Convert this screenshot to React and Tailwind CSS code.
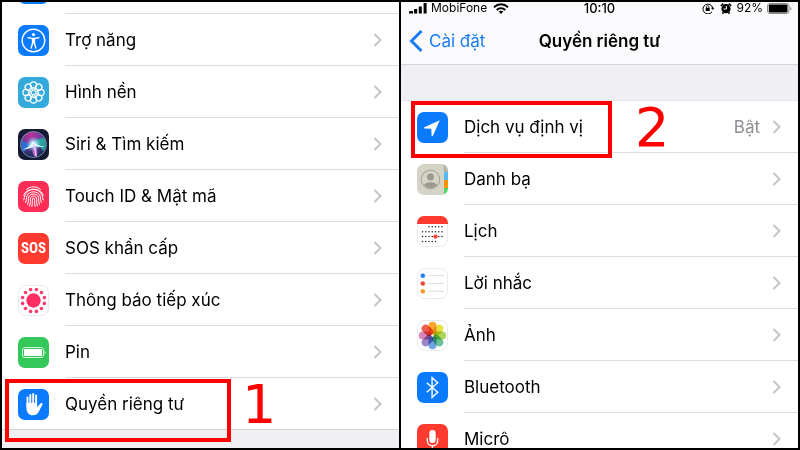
import React from "react";

const dots = (n, r) =>
  Array.from({ length: n }, (_, i) => {
    const a = ((i + 0.5) * 2 * Math.PI) / n;
    return [15.5 + r * Math.cos(a), 15.5 + r * Math.sin(a)];
  });

function Tile({ bg = "#ffffff", outlined = false, children }) {
  return (
    <svg viewBox="0 0 31 31" className="size-[31px] shrink-0" aria-hidden="true">
      <rect
        x={outlined ? 0.5 : 0}
        y={outlined ? 0.5 : 0}
        width={outlined ? 30 : 31}
        height={outlined ? 30 : 31}
        rx="7"
        fill={bg}
        stroke={outlined ? "#e9e9eb" : "none"}
      />
      {children}
    </svg>
  );
}

const AccessibilityIcon = () => (
  <Tile bg="#0a7aff">
    <circle cx="15.5" cy="15.5" r="11.3" fill="none" stroke="#fff" strokeWidth="1.4" />
    <circle cx="15.5" cy="9.6" r="1.6" fill="#fff" />
    <path
      d="M10 12.600l4 .9h3l4-.9M14.600 13.500v4.500l-1.400 5M16.400 13.500v4.500l1.400 5"
      fill="none"
      stroke="#fff"
      strokeWidth="1.400"
      strokeLinecap="round"
      strokeLinejoin="round"
    />
    <path d="M14 13h3v5.500h-3z" fill="#fff" />
  </Tile>
);

const WallpaperIcon = () => (
  <Tile bg="#34aadc">
    <g fill="none" stroke="#fff">
      {Array.from({ length: 8 }, (_, i) => (
        <g key={i} transform={`rotate(${i * 45} 15.500 15.500)`}>
          <circle cx="15.500" cy="8" r="3.100" strokeWidth="1.200" />
          <circle cx="15.500" cy="11.700" r="1.500" strokeWidth="0.800" />
        </g>
      ))}
      <circle cx="15.500" cy="15.500" r="2.200" strokeWidth="1" />
    </g>
  </Tile>
);

const SiriIcon = () => (
  <Tile bg="#171a34">
    <defs>
      <radialGradient id="siri-pink" cx="0.400" cy="0.150" r="0.800">
        <stop offset="0" stopColor="#c22f96" />
        <stop offset="0.500" stopColor="#6c3ba0" />
        <stop offset="1" stopColor="#1c2c5c" />
      </radialGradient>
      <radialGradient id="siri-glow">
        <stop offset="0" stopColor="#fff" />
        <stop offset="0.400" stopColor="#b9f2ff" stopOpacity="0.750" />
        <stop offset="1" stopColor="#5fd6ff" stopOpacity="0" />
      </radialGradient>
    </defs>
    <circle cx="15.500" cy="15.500" r="13" fill="url(#siri-pink)" stroke="#7fa3b4" strokeWidth="0.800" />
    <path d="M15 15Q21 7 26.500 9.500Q30 18 25 22Q23 17 15 15z" fill="#2f9f9c" />
    <path d="M15 15Q10 20 5 23Q2 17 4 11Q9 16 15 15z" fill="#2f6fd0" />
    <path d="M15 15Q21 20 19 28Q13 28 15 15z" fill="#b965c4" />
    <circle cx="15.500" cy="15" r="7.500" fill="url(#siri-glow)" />
    <path d="M4.500 20.500Q13 17.500 14.500 12.500Q17.500 16 27 18Q20 18.500 16.500 16.500Q13 20 4.500 20.500z" fill="#e6faff" />
    <path d="M15.500 15Q17.500 21 18 27" fill="none" stroke="#f0c8f2" strokeWidth="1.300" />
  </Tile>
);

const TouchIcon = () => (
  <Tile bg="#ff2d55">
    <g fill="none" stroke="#fff" strokeWidth="1" strokeLinecap="round">
      <path d="M8.500 8.500c4-3.700 10-3.700 14 0" />
      <path d="M5.800 14.500c2-8.500 17.400-8.500 19.400 0" />
      <path d="M5.800 19c.7-1.500.3-3.500 1.500-5.500 3-6.700 13.400-6.700 16.400 0 1.200 2 .8 4 1.500 5.500" />
      <path d="M7.600 21.500c1-2 .5-4.500 1.300-6.500 2.100-5.500 11.100-5.500 13.200 0 .8 2 .3 4.500 1.300 6.500" />
      <path d="M9.600 23.500c1.200-2.500.3-5.500 1.100-7.500 1.600-4 8-4 9.600 0 .8 2-.1 5 1.100 7.500" />
      <path d="M11.700 25c1.100-3 .2-6 .9-8.200 1-2.400 4.800-2.400 5.800 0 .7 2.200-.2 5.200.9 8.200" />
      <path d="M13.900 25.500c.8-3 .2-6 .6-7.700.3-1.100 1.700-1.100 2 0 .4 1.700-.2 4.700.6 7.700" />
    </g>
  </Tile>
);

const SosIcon = () => (
  <span className="flex size-[31px] shrink-0 items-center justify-center rounded-[7px] bg-[#ff3b30] font-['Liberation_Sans_Narrow','Roboto_Condensed','Roboto',sans-serif] text-[15px] font-bold leading-none text-white">
    SOS
  </span>
);

const ExposureIcon = () => (
  <Tile outlined>
    <circle cx="15.500" cy="15.500" r="7.200" fill="#ff2d62" />
    {dots(12, 11.3).map(([x, y], i) => (
      <circle key={i} cx={x} cy={y} r="1.800" fill="#ff3c6c" />
    ))}
  </Tile>
);

const BatteryTileIcon = () => (
  <Tile bg="#34c759">
    <rect x="4.500" y="10.500" width="21" height="10" rx="2.500" fill="none" stroke="#d4f5dc" />
    <rect x="6" y="12" width="18" height="7" rx="1" fill="#fff" />
    <path d="M26.500 13.800c1.500.4 1.500 3 0 3.400z" fill="#d4f5dc" />
  </Tile>
);

const HandIcon = () => (
  <Tile bg="#0a7aff">
    <g stroke="#fff" strokeWidth="1.900" strokeLinecap="round" fill="none">
      <path d="M9.500 8.500V18M12.300 6V16M15.200 5V16M18.100 6.500V17" />
    </g>
    <path
      d="M8.500 14h10.600v4.200l3.200-3.600c1-1 2.700-.4 2.200.9L21 22.300c-1.100 2.500-3.200 3.900-6.200 3.900-4 0-6.300-2.700-6.300-7z"
      fill="#fff"
    />
  </Tile>
);

const LocationIcon = () => (
  <Tile bg="#0a7aff">
    <path d="M22.800 8.200L7.400 15.300c-.7.400-.5 1.100.2 1.100l6.700.3.300 7c0 .8.800.9 1.200.2z" fill="#fff" />
  </Tile>
);

const ContactsIcon = () => (
  <Tile bg="#d5d2c6">
    <defs>
      <clipPath id="contacts-edge">
        <rect width="31" height="31" rx="7" />
      </clipPath>
      <clipPath id="contacts-face">
        <circle cx="13.500" cy="15.500" r="8.600" />
      </clipPath>
    </defs>
    <g clipPath="url(#contacts-edge)">
      <rect x="26.500" width="5" height="8" fill="#b7b5aa" />
      <rect x="27" y="8" width="4" height="8" fill="#55b9f3" />
      <rect x="27" y="16" width="4" height="8" fill="#ff9500" />
      <rect x="27" y="24" width="4" height="7" fill="#4cd964" />
    </g>
    <circle cx="13.500" cy="15.500" r="9.300" fill="none" stroke="#9c998f" strokeWidth="0.900" />
    <g clipPath="url(#contacts-face)" fill="#9c998f">
      <circle cx="13.500" cy="13" r="3.400" />
      <ellipse cx="13.500" cy="22.500" rx="7" ry="4.200" />
    </g>
  </Tile>
);

const calendarDays = [
  [10.8, 2, 6],
  [15.8, 0, 6],
  [20.6, 0, 6],
  [25.6, 0, 4],
].flatMap(([y, from, to]) => Array.from({ length: to - from + 1 }, (_, i) => [5.5 + (from + i) * 3.25, y]));

const CalendarIcon = () => (
  <Tile outlined>
    <path d="M0 10V7a7 7 0 0 1 7-7h17a7 7 0 0 1 7 7v1H0z" fill="#ff3b30" />
    {calendarDays.map(([x, y]) => (
      <circle key={`${x}-${y}`} cx={x} cy={y} r="0.750" fill="#222" />
    ))}
    <circle cx="18.500" cy="20.600" r="2.100" fill="#ff3b30" />
  </Tile>
);

const RemindersIcon = () => (
  <Tile outlined>
    {[
      [7.7, "#1f7cf2"],
      [15.5, "#f24438"],
      [23.3, "#f59a23"],
    ].map(([y, color]) => (
      <g key={color}>
        <circle cx="5.800" cy={y} r="2" fill={color} stroke={color} strokeOpacity="0.400" strokeWidth="1.200" />
        <path d={`M11.500 ${y}H27`} stroke="#d8d8dc" strokeWidth="0.900" />
      </g>
    ))}
  </Tile>
);

const PhotosIcon = () => (
  <Tile outlined>
    {["#f99a1c", "#e7dc2a", "#a5cf45", "#5bbd8a", "#5f9be0", "#8f79c2", "#d07bb4", "#ee4d3c"].map((color, i) => (
      <rect
        key={color}
        x="11.500"
        y="1.800"
        width="8"
        height="12.600"
        rx="4"
        fill={color}
        fillOpacity="0.900"
        transform={`rotate(${i * 45} 15.500 15.500)`}
        className="mix-blend-multiply"
      />
    ))}
  </Tile>
);

const BluetoothIcon = () => (
  <Tile bg="#0a7aff">
    <path
      d="M9.700 10.700l11 9.600-5.600 5.200V5.500l5.600 5.200-11 9.600"
      fill="none"
      stroke="#fff"
      strokeWidth="1.400"
      strokeLinejoin="miter"
    />
  </Tile>
);

const MicIcon = () => (
  <Tile bg="#ff3b30">
    <rect x="12.300" y="6" width="6.400" height="13" rx="3.200" fill="#fff" />
    <path d="M10.300 14v2.500c0 7 10.400 7 10.400 0V14M15.500 21.500v4M12 25.500h7" fill="none" stroke="#fff" strokeWidth="1.300" />
  </Tile>
);

const Chevron = () => (
  <svg viewBox="0 0 9 14" className="h-3.5 w-[9px] shrink-0" aria-hidden="true">
    <path d="M1.500 1L7.500 7l-6 6" fill="none" stroke="#c4c4c7" strokeWidth="2" />
  </svg>
);

function Callout({ number, boxClass, numberClass }) {
  return (
    <>
      <span className={`pointer-events-none absolute z-10 border-4 border-[#fe0000] ${boxClass}`} />
      <span
        className={`pointer-events-none absolute z-10 font-['DejaVu_Sans',sans-serif] text-[54px] leading-none text-[#fe0000] ${numberClass}`}
      >
        {number}
      </span>
    </>
  );
}

function Row({ icon: Icon, label, value, last = false, children }) {
  return (
    <li className="relative">
      <button type="button" className="flex w-full items-center gap-4 pl-4 text-left">
        <Icon />
        <span
          className={`flex h-[52px] flex-1 items-center border-b pr-[17px] ${last ? "border-transparent" : "border-[#dddde0]"}`}
        >
          <span className="flex-1">{label}</span>
          {value && <span className="pr-3 text-[#8e8e93]">{value}</span>}
          <Chevron />
        </span>
      </button>
      {children}
    </li>
  );
}

function StatusBar() {
  return (
    <div className="grid h-4 grid-cols-[1fr_auto_1fr] items-end px-1.5 pb-1 text-xs leading-3">
      <div className="flex items-center gap-1">
        <svg viewBox="0 0 18 11" className="h-[11px] w-5 pl-0.5" aria-hidden="true">
          <path d="M1.500 8h2a.5.500 0 0 1 .5.500v2H0v-2zM5.200 6H8.200v4.500H5zM9.800 3.500h3v7h-3zM14.600 0h3v10.500h-3z" />
        </svg>
        <span>MobiFone</span>
        <svg viewBox="0 0 16 11" className="ml-0.5 h-[11px] w-4" aria-hidden="true">
          <g fill="none" stroke="#000" strokeWidth="2">
            <path d="M1 4.200c4-3.800 10-3.800 14 0M3.700 7c2.500-2.400 6.100-2.400 8.600 0" />
          </g>
          <path d="M5.700 8.600c1.400-1.200 3.200-1.200 4.600 0L8 11z" />
        </svg>
      </div>
      <span className="text-[13px] font-medium">10:10</span>
      <div className="flex items-center justify-end gap-1">
        <svg viewBox="0 0 12 11" className="h-[11px] w-3" aria-hidden="true">
          <path d="M10 8.700A4.900 4.900 0 1 1 10.700 5" fill="none" stroke="#000" strokeWidth="1" />
          <path d="M9 4.700h3.400L10.700 7z" />
          <rect x="3.700" y="4.800" width="4" height="3.200" />
          <path d="M4.500 5V3.800c0-1.600 2.400-1.600 2.400 0V5" fill="none" stroke="#000" strokeWidth="0.800" />
        </svg>
        <svg viewBox="0 0 12 11" className="ml-0.5 h-[11px] w-3" aria-hidden="true">
          <circle cx="6" cy="5.700" r="4.600" />
          <path d="M.8 3L3.300.6M11.200 3L8.700.6M2.500 10.800l1-1.500M9.500 10.800l-1-1.500" stroke="#000" strokeWidth="1.600" />
          <path d="M6.300 2.800V6H3.500" fill="none" stroke="#fff" strokeWidth="1" />
        </svg>
        <span>92%</span>
        <svg viewBox="0 0 25 11" className="h-[11px] w-[25px]" aria-hidden="true">
          <rect x="0.500" y="0.500" width="21.500" height="10" rx="2.500" fill="none" stroke="#8a8a8c" />
          <rect x="1.800" y="1.600" width="18.700" height="7.800" rx="1" />
          <path d="M23.300 3.700c1.500.4 1.500 3.200 0 3.600z" fill="#8a8a8c" />
        </svg>
      </div>
    </div>
  );
}

export default function App() {
  return (
    <main className="flex h-screen w-full overflow-hidden border-2 border-black bg-white font-['Inter','Noto_Sans',sans-serif] text-[17px] leading-6 text-black">
      <section className="flex min-w-0 flex-1 flex-col" aria-label="Cài đặt">
        <div className="flex h-3 shrink-0 items-end gap-4 overflow-hidden pl-4">
          <span className="mb-2.5 size-[31px] shrink-0 rounded-[7px] bg-[#0a7aff]" />
          <span className="flex-1 border-b border-[#dddde0]" />
        </div>
        <ul>
          <Row icon={AccessibilityIcon} label="Trợ năng" />
          <Row icon={WallpaperIcon} label="Hình nền" />
          <Row icon={SiriIcon} label="Siri & Tìm kiếm" />
          <Row icon={TouchIcon} label="Touch ID & Mật mã" />
          <Row icon={SosIcon} label="SOS khẩn cấp" />
          <Row icon={ExposureIcon} label="Thông báo tiếp xúc" />
          <Row icon={BatteryTileIcon} label="Pin" />
          <Row icon={HandIcon} label="Quyền riêng tư" last>
            <Callout number="1" boxClass="left-[3px] top-px h-[63px] w-[226px]" numberClass="left-60 top-0" />
          </Row>
        </ul>
        <div className="-mt-px flex-1 border-t border-[#d5d5d9] bg-[#efeff4]" />
      </section>

      <section className="flex min-w-0 flex-1 flex-col border-l-2 border-black" aria-label="Quyền riêng tư">
        <header className="shrink-0 border-b border-[#d5d5d9] bg-[#fafafc]">
          <StatusBar />
          <div className="grid h-[46px] grid-cols-[1fr_auto_1fr] items-center px-2">
            <button type="button" className="flex items-center gap-1.5 text-[#1a7cf5]">
              <svg viewBox="0 0 14 22" className="h-[22px] w-3.5" aria-hidden="true">
                <path d="M12.500 1L2.500 11l10 10" fill="none" stroke="#1a7cf5" strokeWidth="3" />
              </svg>
              Cài đặt
            </button>
            <h1 className="font-semibold">Quyền riêng tư</h1>
          </div>
        </header>
        <div className="h-9 shrink-0 border-b border-[#e6e6ea] bg-[#efeff4]" />
        <ul>
          <Row icon={LocationIcon} label="Dịch vụ định vị" value="Bật">
            <Callout number="2" boxClass="left-[10px] top-0 h-[57px] w-[201px]" numberClass="left-[234px] top-0" />
          </Row>
          <Row icon={ContactsIcon} label="Danh bạ" />
          <Row icon={CalendarIcon} label="Lịch" />
          <Row icon={RemindersIcon} label="Lời nhắc" />
          <Row icon={PhotosIcon} label="Ảnh" />
          <Row icon={BluetoothIcon} label="Bluetooth" />
          <Row icon={MicIcon} label="Micrô" />
        </ul>
      </section>
    </main>
  );
}
